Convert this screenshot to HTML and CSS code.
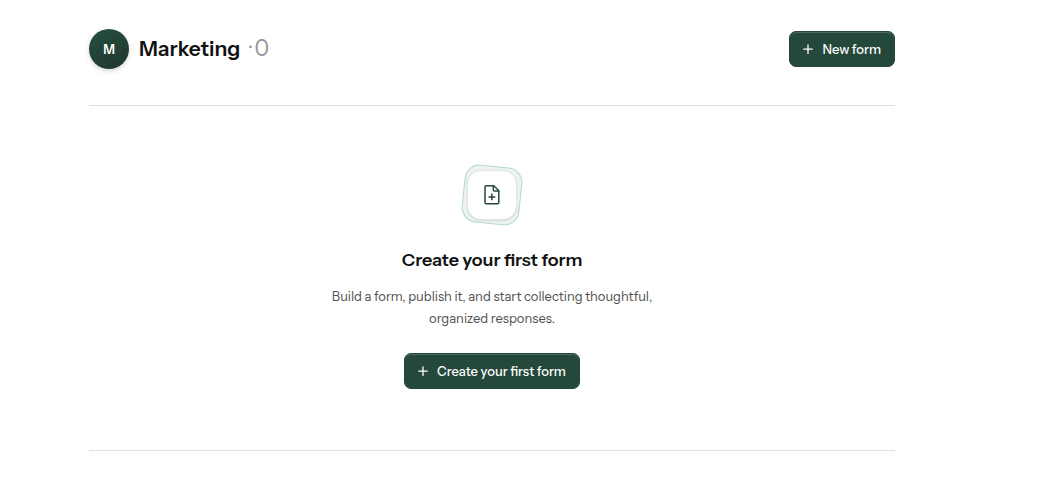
FILE: index.html
```html
<!DOCTYPE html>
<html lang="en">
<head>
<meta charset="UTF-8">
<meta name="viewport" content="width=device-width, initial-scale=1.0">
<title>Marketing</title>
<link rel="stylesheet" href="styles.css">
</head>
<body>
  <main class="workspace">
    <header class="workspace-header">
      <div class="avatar">M</div>
      <h1>Marketing</h1>
      <span class="count"><span class="dot">·</span>0</span>
      <button class="btn" type="button">
        <svg width="16" height="16" viewBox="0 0 16 16" aria-hidden="true"><path d="M8 4v8.4M3.8 8.2h8.4"/></svg>
        New form
      </button>
    </header>

    <section class="empty">
      <div class="empty-icon">
        <svg width="20" height="22" viewBox="0 0 20 22" aria-hidden="true">
          <path d="M11.8 1.7H4.3C3.4 1.7 3 2.2 3 3v15.5c0 .9.4 1.3 1.3 1.3h11.2c.9 0 1.3-.4 1.3-1.3V6.7z"/>
          <path d="M11.3 2v3.7c0 .9.5 1.3 1.4 1.3h4M9.9 10v5.8M7 12.9h5.8"/>
        </svg>
      </div>
      <h2>Create your first form</h2>
      <p>Build a form, publish it, and start collecting thoughtful, organized responses.</p>
      <button class="btn" type="button">
        <svg width="16" height="16" viewBox="0 0 16 16" aria-hidden="true"><path d="M8 4v8.4M3.8 8.2h8.4"/></svg>
        Create your first form
      </button>
    </section>
  </main>
</body>
</html>
```
FILE: styles.css
```css
* {
  box-sizing: border-box;
}
body {
  margin: 0;
  background: #fff;
  color: #111;
  font-family: "Instrument Sans", Inter, "Liberation Sans", sans-serif;
}
h1, h2, p {
  margin: 0;
}
.workspace {
  padding: 29px 15% 0 89px;
}
.workspace-header {
  display: flex;
  align-items: center;
  padding-bottom: 36px;
  border-bottom: 1px solid #e0e0e0;
}
.avatar {
  display: flex;
  align-items: center;
  justify-content: center;
  width: 40px;
  height: 40px;
  margin-right: 10px;
  border-radius: 50%;
  background: linear-gradient(150deg, #254b3d 20%, #20352d);
  box-shadow: 0 2px 5px rgba(0, 0, 0, 0.16);
  color: #fff;
  font-size: 13px;
  line-height: 18px;
  font-weight: 600;
}
h1 {
  font-size: 21px;
  font-weight: 600;
  line-height: 28px;
}
.count {
  margin-left: 9px;
  color: #999;
  font-size: 22px;
  font-weight: 300;
  line-height: 28px;
}
.dot {
  margin-right: 3px;
}
.btn {
  display: inline-flex;
  align-items: center;
  gap: 6px;
  height: 36px;
  padding: 0 13px 0 10px;
  border: 1px solid #24483a;
  border-radius: 7px;
  background: #24483a;
  box-shadow: inset 0 1px 0 #49695c;
  color: #fff;
  font-family: inherit;
  font-size: 13px;
  font-weight: 500;
  line-height: 18px;
  cursor: pointer;
}
.btn:hover {
  background: #1d3b30;
}
.btn svg {
  fill: none;
  stroke: currentColor;
  stroke-width: 1.3;
  stroke-linecap: round;
}
.workspace-header .btn {
  margin-left: auto;
}
.empty {
  display: flex;
  flex-direction: column;
  align-items: center;
  padding: 64px 24px 61px;
  border-bottom: 1px solid #e0e0e0;
  text-align: center;
}
.empty-icon {
  position: relative;
  z-index: 0;
  display: flex;
  align-items: center;
  justify-content: center;
  width: 50px;
  height: 50px;
}
/* tilted tile behind the icon */
.empty-icon::before {
  content: "";
  position: absolute;
  inset: -4px;
  z-index: -2;
  border: 1px solid #b5d8c9;
  border-radius: 15px;
  background: #edf3f0;
  transform: rotate(6deg);
}
.empty-icon::after {
  content: "";
  position: absolute;
  inset: 0;
  z-index: -1;
  border: 1px solid #e1e5e3;
  border-radius: 14px;
  background: #fff;
  box-shadow: 0 1px 2px rgba(0, 0, 0, 0.1);
}
.empty-icon svg {
  fill: none;
  stroke: #24483a;
  stroke-width: 1.5;
  stroke-linecap: round;
  stroke-linejoin: round;
}
.empty h2 {
  margin-top: 28px;
  font-size: 18px;
  font-weight: 600;
  line-height: 24px;
}
.empty p {
  max-width: 340px;
  margin: 13px 0 24px;
  color: #505050;
  font-size: 13px;
  line-height: 22px;
}
```
